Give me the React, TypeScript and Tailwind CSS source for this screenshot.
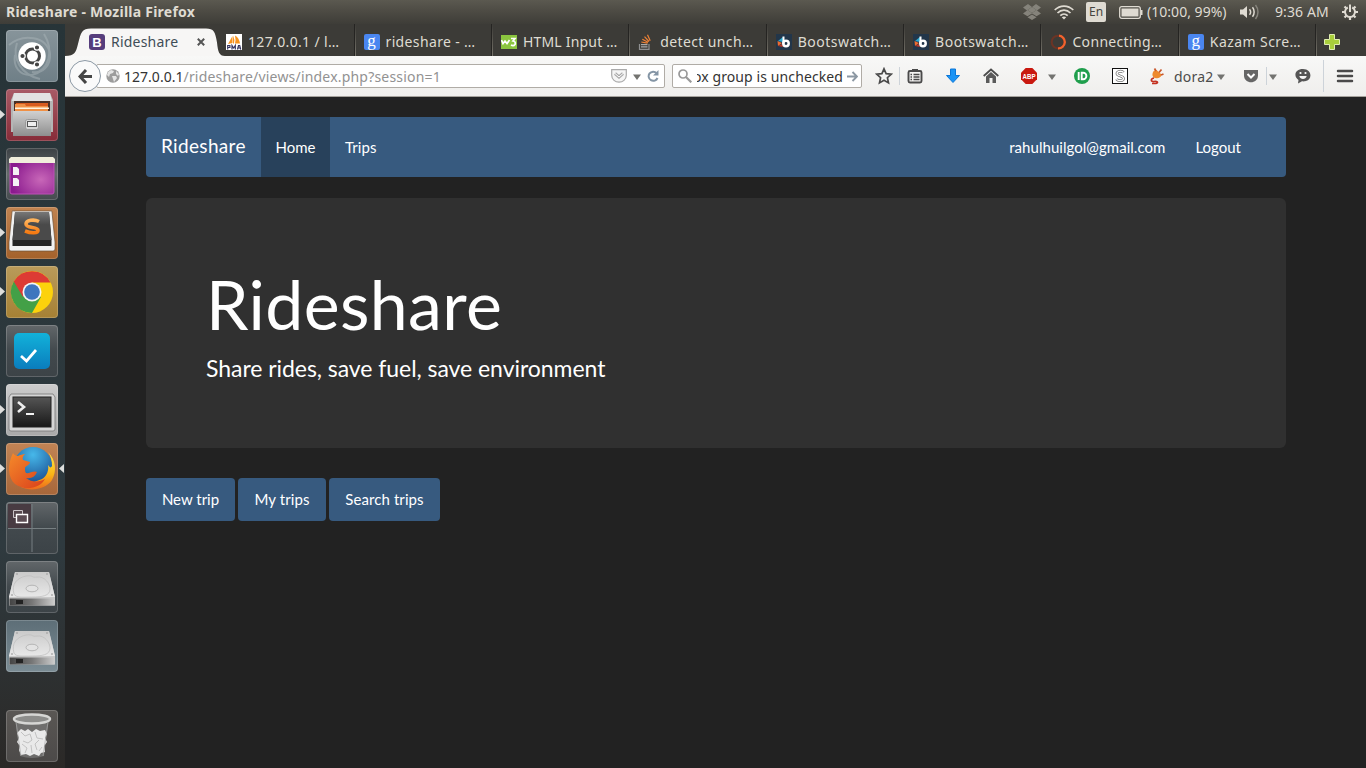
import React from "react";

type Kids = { children?: React.ReactNode };

const ui = "font-['Noto_Sans',sans-serif]";

function Down({ cls = "" }: { cls?: string }) {
  return (
    <svg width="8" height="6" viewBox="0 0 8 6" className={`relative top-px shrink-0 ${cls}`}>
      <path d="M0 .5h8L4 6z" fill="#737370" />
    </svg>
  );
}

function Sep({ cls = "" }: { cls?: string }) {
  return <div className={`w-px shrink-0 bg-[#cdd3d9] ${cls}`} />;
}

function Ico({ cls = "", children }: Kids & { cls?: string }) {
  return (
    <svg width="18" height="18" viewBox="0 0 18 18" className={`shrink-0 ${cls}`}>
      {children}
    </svg>
  );
}

/* ---------- top panel ---------- */

function TopPanel() {
  return (
    <div className={`flex h-6 shrink-0 items-center bg-linear-to-b from-[#5b5950] via-[#4c4a43] to-[#3e3d38] text-[14px] leading-6 text-[#dfdbd2] ${ui}`}>
      <div className="ml-[6px] text-[14px] font-bold tracking-[0.24px] whitespace-nowrap">Rideshare - Mozilla Firefox</div>
      <div className="ml-auto flex h-full items-center">
        <svg width="18" height="16" viewBox="0 0 18 16" className="shrink-0">
          <path d="M5 0 9 3 4.500 6 9 9 13.500 6 9 3 13 0 18 3.500 14 6.500 18 9.500 13.500 12.300 9 9.400 4.500 12.300 0 9.500 4 6.500 0 3.500zM4.500 13.200 9 10.500l4.500 2.700L9 16z" fill="#85837b" />
          <path d="M9 3 13.500 6 9 9 4.500 6z" fill="#85837b" />
        </svg>
        <svg width="20" height="15" viewBox="0 0 20 15" className="ml-[13px] shrink-0" fill="none" stroke="#dfdbd2" strokeWidth="1.700">
          <path d="M.7 5C6-.3 14-.3 19.300 5M3.500 8c3.800-3.800 9.200-3.800 13 0M6.300 10.700c2.200-2.200 5.200-2.200 7.400 0" />
          <path d="M10 14.500 7.800 12.300c1.300-1 3.100-1 4.400 0z" fill="#dfdbd2" stroke="none" />
        </svg>
        <div className="ml-[12px] flex h-5 w-5 items-center justify-center rounded-[2px] bg-[#dfdbd2] text-[12px] text-[#45443e]">En</div>
        <svg width="24" height="13" viewBox="0 0 24 13" className="ml-[13px] shrink-0">
          <rect x=".7" y=".7" width="20.600" height="11.600" rx="2" fill="none" stroke="#dfdbd2" strokeWidth="1.300" />
          <rect x="2.500" y="2.500" width="17" height="8" fill="#dfdbd2" />
          <path d="M22 4h1.500v5H22z" fill="#dfdbd2" />
        </svg>
        <div className="ml-[4px] w-[81px] text-[14px] tracking-[0.03px] whitespace-nowrap">(10:00, 99%)</div>
        <svg width="20" height="16" viewBox="0 0 20 16" className="ml-[12px] shrink-0" fill="none" stroke="#dfdbd2" strokeWidth="1.500">
          <path d="M0 5.500h3L7 2v12l-4-3.500H0z" fill="#dfdbd2" stroke="none" />
          <path d="M9.500 5.200c1.300 1.600 1.300 4 0 5.600M12.500 3.200c2.200 2.700 2.200 6.900 0 9.600" />
          <path d="M15.500 1c3.300 4 3.300 10 0 14" stroke="#85837b" />
        </svg>
        <div className="ml-[15px] w-[56px] text-[14px] tracking-[0.1px] whitespace-nowrap">9:36 AM</div>
        <svg width="16" height="16" viewBox="0 0 16 16" className="mr-[8px] ml-[11px] shrink-0" fill="none" stroke="#dfdbd2">
          <path d="M5.800 3.500a5 5 0 1 0 4.400 0" strokeWidth="2" />
          <path d="M8 .5V8" strokeWidth="2" />
          <path d="M2.500 2.500 4.300 4.300M13.500 2.500l-1.800 1.800M0 8h3M13 8h3M2.500 13.500l1.800-1.800M13.500 13.500l-1.800-1.800M8 13v3" strokeWidth="2.200" />
        </svg>
      </div>
    </div>
  );
}

/* ---------- launcher ---------- */

function Tile({ bg, cls = "", left, right, children }: Kids & { bg: string; cls?: string; left?: boolean; right?: boolean }) {
  return (
    <div className={`relative h-[52px] w-full shrink-0 ${cls}`}>
      {left && (
        <svg width="5" height="9" viewBox="0 0 5 9" className="absolute top-[21px] left-0">
          <path d="M0 0v9l5-4.500z" fill="#dededc" />
        </svg>
      )}
      {right && (
        <svg width="5" height="9" viewBox="0 0 5 9" className="absolute top-[21px] right-[1px]">
          <path d="M5 0v9L0 4.500z" fill="#dededc" />
        </svg>
      )}
      <div className={`ml-[6px] h-[52px] w-[52px] rounded-[4px] shadow-[inset_0_0_0_1px_rgba(255,255,255,0.18)] ${bg}`}>
        <svg width="52" height="52" viewBox="0 0 52 52">{children}</svg>
      </div>
    </div>
  );
}

function Drive() {
  return (
    <>
      <path d="M9 11h34l6 25v8.500H3V36z" fill="#c9c9c9" />
      <path d="M9 11h34l6 25H3z" fill="url(#drvTop)" />
      <path d="M3.500 37.500h45v7h-45z" fill="url(#drvFront)" />
      <path d="M10 39h7v4h-7z" fill="#222" />
      <path d="M8 33c-3-10 3-16 12-18 8-1 5 2 11 1 8-1 13 7 13 12 0 7-8 8-18 8S10 37 8 33z" fill="none" stroke="#bbb" strokeWidth=".7" />
      <ellipse cx="26" cy="27.500" rx="6" ry="3.300" fill="#e2e2e2" stroke="#aaa" strokeWidth=".8" />
      <g fill="#888">
        <circle cx="11" cy="13" r=".7" />
        <circle cx="41" cy="13" r=".7" />
        <circle cx="6" cy="34" r=".8" />
        <circle cx="46" cy="34" r=".8" />
      </g>
    </>
  );
}

function Defs() {
  return (
    <defs>
      <linearGradient id="drvTop" x1="0" y1="0" x2="0" y2="1"><stop offset="0" stopColor="#cacaca" /><stop offset="1" stopColor="#e8e8e8" /></linearGradient>
      <linearGradient id="drvFront"><stop offset="0" stopColor="#444" /><stop offset=".5" stopColor="#777" /><stop offset="1" stopColor="#ccc" /></linearGradient>
      <linearGradient id="cab" x1="0" y1="0" x2="0" y2="1"><stop offset="0" stopColor="#d0d0d0" /><stop offset="1" stopColor="#8e8e8e" /></linearGradient>
      <radialGradient id="purple" cx=".7" cy=".6" r=".7"><stop offset="0" stopColor="#c867b8" /><stop offset="1" stopColor="#8a1a8e" /></radialGradient>
      <linearGradient id="dark" x1="0" y1="0" x2="0" y2="1"><stop offset="0" stopColor="#777" /><stop offset=".45" stopColor="#4a4a4a" /><stop offset="1" stopColor="#4a4a4a" /></linearGradient>
      <linearGradient id="term" x1="0" y1="0" x2="0" y2="1"><stop offset="0" stopColor="#555" /><stop offset="1" stopColor="#181818" /></linearGradient>
      <linearGradient id="orange" x1="0" y1="0" x2="0" y2="1"><stop offset="0" stopColor="#ffb45c" /><stop offset="1" stopColor="#f57a12" /></linearGradient>
      <linearGradient id="task" x1="0" y1="0" x2="0" y2="1"><stop offset="0" stopColor="#12b2da" /><stop offset="1" stopColor="#0a7dbd" /></linearGradient>
      <radialGradient id="globe" cx=".5" cy=".2" r=".9"><stop offset="0" stopColor="#46b8ea" /><stop offset="1" stopColor="#12397f" /></radialGradient>
      <linearGradient id="fox" x1="0" y1="0" x2="1" y2="1"><stop offset="0" stopColor="#f58a2a" /><stop offset="1" stopColor="#d93f1c" /></linearGradient>
      <linearGradient id="tail" x1="0" y1="0" x2="0" y2="1"><stop offset="0" stopColor="#ffe94a" /><stop offset=".6" stopColor="#fbb416" /><stop offset="1" stopColor="#ee6a1d" /></linearGradient>
    </defs>
  );
}

const glass = "bg-linear-to-b from-[#62676a] via-[#42494d] to-[#3c4347]";

function Launcher() {
  return (
    <div className="flex w-[65px] shrink-0 flex-col gap-[7px] bg-linear-to-b from-[#273438] via-[#2f3a3f] via-70% to-[#2b2927] pt-[6px]">
      <Tile bg="bg-linear-to-b from-[#87949a] to-[#6f7f87]">
        <Defs />
        <g fill="none" stroke="#a9b4b8" strokeWidth="2" opacity=".5">
          <path d="M3 15C17 3 41 6 44 24c1 12-8 20-18 18" />
          <path d="M38 4c10 16 6 36-12 41C13 46 7 36 9 25" />
          <path d="M11 13C6 28 15 45 34 49" />
        </g>
        <circle cx="26" cy="26" r="13.700" fill="#fff" />
        <circle cx="26.500" cy="26" r="7" fill="none" stroke="#444" strokeWidth="3" />
        <g stroke="#fff" strokeWidth="1.200" fill="#444">
          <circle cx="16.500" cy="26" r="2.700" />
          <circle cx="31" cy="17.500" r="2.700" />
          <circle cx="31" cy="34.500" r="2.700" />
        </g>
      </Tile>
      <Tile bg="bg-linear-to-b from-[#a85a66] to-[#872b38]" left>
        <path d="M8 4h36l3 7v32H5V11z" fill="#b5b5b5" />
        <path d="M8 4h36l2 8H6z" fill="#e2e2e2" />
        <path d="M8 12h36v11H8z" fill="#4a3026" />
        <path d="M10 14h32v8H10z" fill="#d95b1e" />
        <path d="M9 15h10l1 2h22v5H9z" fill="#f09045" />
        <path d="M9 18.500h34v1.500H9z" fill="#fff3df" />
        <path d="M7 22h38v25H7z" fill="url(#cab)" />
        <rect x="19.500" y="30.500" width="13" height="10" rx="2" fill="#d5d5d5" stroke="#999" />
        <rect x="21.500" y="32.500" width="9" height="5" fill="#eee" stroke="#555" />
      </Tile>
      <Tile bg="bg-linear-to-b from-[#3b4144] via-[#656a6c] to-[#454b4f]">
        <rect x="4" y="10" width="44" height="36" rx="2" fill="url(#purple)" stroke="#bd51b6" />
        <path d="M5 9h42l2 2v4H3v-4z" fill="#f1eedc" />
        <path d="M7 19h4l2 2v6H7zM7 30h4l2 2v6H7z" fill="#f4f0f4" />
      </Tile>
      <Tile bg="bg-linear-to-b from-[#c08350] to-[#a4622b]" left>
        <path d="M6 5q0-2 2-1h36q2-1 2 1l3 30v7q0 2-2 2H5q-2 0-2-2v-7z" fill="#f1f1f1" stroke="#6b5038" strokeWidth=".7" />
        <path d="M9 5h34l2.500 28v6h-39v-6z" fill="#242424" />
        <path d="M9 5h34l2.500 28h-39z" fill="url(#dark)" />
        <path d="M33 14.500c-5-2.500-13-1.500-13 2.500 0 5 12 2 12 6.500 0 3-7 3-13 .5" fill="none" stroke="url(#orange)" strokeWidth="3.600" />
      </Tile>
      <Tile bg="bg-linear-to-b from-[#b99b5a] to-[#a68134]" left>
        <circle cx="26" cy="26" r="21" fill="#fcd20c" />
        <path d="M26 26 7.800 15.500A21 21 0 0 0 26 47L35 31z" fill="#43a047" />
        <path d="M7.800 15.500A21 21 0 0 1 44.500 16.500H26L17 31z" fill="#dd3b34" />
        <circle cx="26" cy="26" r="9.500" fill="#f5f5f5" />
        <circle cx="26" cy="26" r="7.800" fill="#3d76be" />
      </Tile>
      <Tile bg={glass}>
        <rect x="8" y="8" width="36" height="36" rx="5" fill="url(#task)" />
        <path d="m15 31 5.500 5L30 25" fill="none" stroke="#fff" strokeWidth="2.700" />
      </Tile>
      <Tile bg="bg-linear-to-b from-[#ccc] to-[#a9a9a9]" left>
        <path d="M5 10h42l2 3v32q0 2-2 2H5q-2 0-2-2V13z" fill="#d5d5d5" stroke="#777" strokeWidth=".8" />
        <rect x="7" y="13" width="38" height="30" fill="url(#term)" stroke="#222" />
        <path d="m12 18 6 5-6 5" fill="none" stroke="#eee" strokeWidth="2.600" />
        <path d="M20 29h8v2h-8z" fill="#f3f3f3" />
      </Tile>
      <Tile bg="bg-linear-to-b from-[#c18454] to-[#a7673a]" left right>
        <circle cx="27" cy="23.500" r="19.500" fill="url(#globe)" />
        <path d="M42 9c8 8 9 19 4 28-6 9-21 12-31 7L36 36c5-3 7-9 6-14 2 3 3 3 4 1 0-5-1-10-4-14z" fill="url(#tail)" />
        <path d="M7 10c1 2 3 3 5 3 2-1 5-2 7-2-2 2-3 4-2 6l7 2c0 3-5 4-5 6s0 4 1 5c3 1 8-3 11-1-2 5-6 7-11 6 6 5 14 4 19 1-5 10-21 12-30 5C2 35 1 22 7 10z" fill="url(#fox)" />
      </Tile>
      <Tile bg={glass}>
        <path d="M2 2h23v24H2z" fill="#483b42" />
        <path d="M26 2v48M2 26.500h48" stroke="#777f82" strokeWidth="1" />
        <path d="M7.500 8.500h9v7h-9z" fill="#55474d" stroke="#c9c3c6" />
        <path d="M10.500 12.500h11v8h-11z" fill="#5c4d54" stroke="#fff" strokeWidth="1.400" />
      </Tile>
      <Tile bg={glass}><Drive /></Tile>
      <Tile bg="bg-linear-to-b from-[#5d6e77] to-[#7b8c94]"><Drive /></Tile>
      <Tile bg="bg-linear-to-b from-[#5a5754] to-[#4c4a49]" cls="mt-[31px]">
        <path d="M9 8h34l-5 38q-12 4-24 0z" fill="#7b7b79" opacity=".7" />
        <path d="m11 23 4-4 4 2 3-2 4 3 4-3 4 2 5-1 2 4-2 4 2 4-3 4 1 6-4 1-2 3-5-2-4 2-4-2-5 1-2-5 1-4-3-4 2-4z" fill="#e9e9e9" />
        <path d="m15 22 4 4 5-2 2 6-4 3-5-2M29 22l2 6 6 1M33 30l-4 4 2 6M16 34l5 4-2 5M25 35l1 8M36 37l-3 4" fill="none" stroke="#c2c2c2" strokeWidth="1" />
        <ellipse cx="26" cy="9" rx="18" ry="4.500" fill="#8d8d8b" stroke="#d6d6d4" strokeWidth="2.500" />
        <path d="m10 12 5 34M42 12l-5 34" stroke="#aaa" strokeWidth=".7" />
      </Tile>
    </div>
  );
}

/* ---------- favicons ---------- */

function Fav({ children }: Kids) {
  return <svg width="16" height="16" viewBox="0 0 16 16" className="shrink-0">{children}</svg>;
}

const BootIcon = () => (
  <div className="flex h-4 w-4 shrink-0 items-center justify-center rounded-[3px] bg-[#563d7c] font-['Liberation_Sans',sans-serif] text-[13px] leading-none font-bold text-white">B</div>
);
const PmaIcon = () => (
  <Fav>
    <path d="M0 0h16v16H0z" fill="#fff" />
    <path d="M2 10 6.500 2v7zM7 9.500V1.500q2 4 1 8zM9 9.500q1-4 0-8 4 2 5 8z" fill="#f7931e" />
    <path d="M1.700 15.500v-4h2.200v2H2M6 15.500v-4l1.600 2.500 1.700-2.500v4M11.500 15.500l1-4h1.200l1 4M11.800 14h3" fill="none" stroke="#33335f" strokeWidth="1.200" />
  </Fav>
);
const GoogleIcon = () => (
  <div className="flex h-4 w-4 shrink-0 items-center justify-center rounded-[2px] bg-[#4a86f0] pb-[3px] font-['Liberation_Serif',serif] text-[17px] leading-none text-white">g</div>
);
const W3Icon = () => (
  <Fav>
    <path d="M0 1h16v14H0z" fill="#8bc53f" />
    <path d="M.5 6 2 9.500 4 7l2 2.500L8.500 6M10 4.500h4L12 7q3 .500 2 3.500-1.500 2-4 .500" fill="none" stroke="#fff" strokeWidth="1.700" />
  </Fav>
);
const StackIcon = () => (
  <Fav>
    <path d="M1.500 10v5.300h9.500V10" fill="none" stroke="#8f9091" strokeWidth="1.200" />
    <path d="M3 12.800h6.500M3 10.600h6.500" stroke="#aaa" strokeWidth="1.200" />
    <path d="m3.300 8 6.300 1.200M4.300 5.300l5.800 3M6.500 2.700l4.500 4.800M9.500.8l2.700 6" stroke="#ef8236" strokeWidth="1.200" />
  </Fav>
);
const SwatchIcon = () => (
  <Fav>
    <path d="M0 0h16v16H0z" fill="#22364a" />
    <path d="M7 3v5L2 7z" fill="#29a9d2" />
    <path d="M1.500 7 6 9l-4 3z" fill="#ee6c30" />
    <path d="m2 12 4-2 1 3z" fill="#b73527" />
    <path d="M7.500 2.500V10" stroke="#fff" strokeWidth="2" />
    <circle cx="10" cy="9.500" r="2.700" fill="none" stroke="#fff" strokeWidth="2.500" />
  </Fav>
);
const SpinIcon = () => (
  <Fav>
    <circle cx="8" cy="8" r="6.300" fill="none" stroke="#6b3425" strokeWidth="2" />
    <path d="M9 1.700a6.300 6.300 0 0 1-1 12.600" fill="none" stroke="#f2622d" strokeWidth="2.300" />
  </Fav>
);

const tabs: [React.ComponentType, string, string][] = [
  [GoogleIcon, "rideshare - …", "tracking-[0.36px]"],
  [W3Icon, "HTML Input …", "tracking-[0.2px]"],
  [StackIcon, "detect unch…", "tracking-[0.38px]"],
  [SwatchIcon, "Bootswatch…", "tracking-[0.5px]"],
  [SwatchIcon, "Bootswatch…", "tracking-[0.5px]"],
  [SpinIcon, "Connecting…", "tracking-[0.32px]"],
  [GoogleIcon, "Kazam Scre…", "tracking-[0.42px]"],
];

function TabStrip() {
  return (
    <div className={`flex h-8 shrink-0 bg-[#3c3b37] text-[14px] text-[#dfdbd2] ${ui}`}>
      <div className="relative flex w-[157px] shrink-0 items-center pt-[4px] pl-[24px]">
        <svg width="160" height="28" viewBox="0 0 160 28" className="absolute top-[4px] left-0">
          <path d="M0 28c10 0 11-4 13-12C16 4 17 .5 26 .5h115c8 0 9 3 11 14 1 9 2 13.500 8 13.500z" fill="#f7f6f5" />
        </svg>
        <div className="relative flex items-center">
          <BootIcon />
          <span className="mb-[2px] ml-[6px] w-[86px] tracking-[0.2px] text-[#3f4d57]">Rideshare</span>
          <svg width="8" height="8" viewBox="0 0 8 8"><path d="m.8.8 6.400 6.400M7.200.8.8 7.200" stroke="#555" strokeWidth="2" /></svg>
        </div>
      </div>
      <div className="flex w-[131.500px] shrink-0 items-center pt-[4px] pl-[4px] whitespace-nowrap">
        <PmaIcon />
        <span className="mb-[2px] ml-[6px] tracking-[0.35px]">127.0.0.1 / l…</span>
      </div>
      {tabs.map(([Icon, label, tr], i) => (
        <div key={i} className="flex w-[137.400px] shrink-0 items-center pt-[4px] whitespace-nowrap">
          <div className="-mt-[4px] h-8 w-[2px] shrink-0 border-l border-[#252422] bg-linear-to-b from-[#3c3b37] to-[#77746b]" />
          <div className="ml-[8px] flex items-center">
            <Icon />
            <span className={`mb-[2px] ml-[6px] ${tr}`}>{label}</span>
          </div>
        </div>
      ))}
      <div className="flex grow items-center pt-[4px]">
        <div className="-mt-[4px] mr-[7px] h-8 w-[2px] shrink-0 border-l border-[#252422] bg-linear-to-b from-[#3c3b37] to-[#77746b]" />
        <Fav><path d="M5.500.5h5v5h5v5h-5v5h-5v-5h-5v-5h5z" fill="#a9cf3c" stroke="#e0eeb0" /></Fav>
      </div>
    </div>
  );
}

/* ---------- navigation toolbar ---------- */

function Toolbar() {
  return (
    <div className={`flex h-[41px] shrink-0 items-center border-b border-[#a5a29c] bg-linear-to-b from-[#f8f8f7] to-[#efeeec] text-[14px] text-[#333] ${ui}`}>
      <div className="z-10 ml-[4px] flex h-8 w-8 shrink-0 items-center justify-center rounded-full border border-[#8c99a5] bg-[#fafafa]">
        <svg width="15" height="15" viewBox="0 0 15 15" fill="none" stroke="#454545" strokeWidth="3"><path d="M8 1 2 7.500 8 14M2.500 7.500H14" /></svg>
      </div>
      <div className="-ml-[5px] flex h-6 w-[569px] shrink-0 items-center rounded-[2px] border border-[#b0aca6] bg-white pl-[9px]">
        <svg width="14" height="14" viewBox="0 0 14 14" className="shrink-0">
          <circle cx="7" cy="7" r="6.700" fill="#9c9c9c" />
          <path d="M2 3 5 1l3 1-1 2-3 1-1 3-2-2zM6 7l4 0 1 2-3 4-1-3zM10 2l3 3-1 2-2-2z" fill="#e4e4e4" />
        </svg>
        <span className="ml-[4px] tracking-[0.02px] whitespace-nowrap">127.0.0.1<span className="tracking-[0.19px] text-[#929292]">/rideshare/views/index.php?session=1</span></span>
        <svg width="16" height="14" viewBox="0 0 16 14" className="ml-auto" fill="none" stroke="#aaa">
          <path d="M.7.700h14.600v5.500c0 9.200-14.600 9.200-14.600 0z" strokeWidth="1.200" fill="#f5f5f5" />
          <path d="m4 4.500 4 3.500 4-3.500" strokeWidth="3" /><path d="m4 4.500 4 3.500 4-3.500" stroke="#fff" />
        </svg>
        <Down cls="ml-[6px]" />
        <svg width="12" height="12" viewBox="0 0 12 12" className="mr-[5px] ml-[6px]" fill="none" stroke="#8495a5" strokeWidth="2">
          <path d="M9.500 3A4.600 4.600 0 1 0 10.500 8" /><path d="M11.500 0v5.500H6z" fill="#8495a5" stroke="none" />
        </svg>
      </div>
      <div className="ml-[7px] flex h-6 w-[190px] shrink-0 items-center rounded-[2px] border border-[#b0aca6] bg-white pl-[5px]">
        <svg width="14" height="14" viewBox="0 0 14 14" className="shrink-0" fill="none" stroke="#999"><circle cx="5" cy="5" r="4" strokeWidth="1.700" /><path d="m8 8 5.300 5.300" strokeWidth="2.200" /></svg>
        <div className="ml-[5px] flex w-[146px] shrink-0 justify-end overflow-hidden whitespace-nowrap"><span className="tracking-[0.1px]">ox group is unchecked</span></div>
        <svg width="11" height="11" viewBox="0 0 11 11" className="ml-[4px] shrink-0" fill="none" stroke="#8c98a3" strokeWidth="1.900"><path d="M0 5.500h9M5.500 1 10 5.500 5.500 10" /></svg>
      </div>
      <Ico cls="ml-[13px]"><path d="m9 1.800 2.100 4.800 5.100.600-3.800 3.500 1.100 5.200L9 13.300l-4.500 2.600 1.100-5.200L1.800 7.200l5.100-.6z" fill="none" stroke="#4a4a4a" strokeWidth="1.700" /></Ico>
      <Sep cls="ml-[6px] h-[18px]" />
      <Ico cls="ml-[6px]">
        <rect x="2.500" y="4" width="13" height="11.500" rx="1.500" fill="none" stroke="#4a4a4a" strokeWidth="1.900" />
        <path d="M6 2h6v3H6z" fill="#4a4a4a" />
        <path d="M4.500 7.500h1.500M7.500 7.500h6M4.500 10h1.500M7.500 10h6M4.500 12.500h1.500M7.500 12.500h6" stroke="#4a4a4a" strokeWidth="1.500" />
      </Ico>
      <Ico cls="ml-[20px]"><path d="M6.500 2h5v6.500h4L9 15.500 2.500 8.500h4z" fill="#1b94f5" stroke="#0b77d8" /></Ico>
      <Ico cls="ml-[20px]"><path d="M1.700 9 9 2.500 16.300 9" fill="none" stroke="#4c4c4c" strokeWidth="1.800" /><path d="M4 9.500 9 5l5 4.500V16h-3.500v-5h-3v5H4z" fill="#5a5a5a" /></Ico>
      <Ico cls="ml-[20px]">
        <path d="M5.700 1h6.600L17 5.700v6.600L12.300 17H5.700L1 12.300V5.700z" fill="#c9180f" />
        <text x="9" y="11.800" textAnchor="middle" fontFamily="Liberation Sans" fontWeight="bold" fontSize="8" textLength="13" lengthAdjust="spacingAndGlyphs" fill="#fff">ABP</text>
      </Ico>
      <Down cls="ml-[10px]" />
      <Ico cls="ml-[17px]"><circle cx="9" cy="9" r="8" fill="#1f9e4c" /><path d="M5.700 5v8M8.700 5.800h1.500a3.200 3.200 0 0 1 0 6.400H8.700z" fill="none" stroke="#fff" strokeWidth="1.900" /></Ico>
      <Ico cls="ml-[20px]"><rect x="1.500" y="1.500" width="15" height="15" fill="#fff" stroke="#111" /><path d="M12.500 5.500C11 3.500 6 4 6 6.500c0 3 6.500 2 6.500 5 0 2.500-5.500 3-7 .5" fill="none" stroke="#777" strokeWidth="2.800" /><path d="M12.500 5.500C11 3.500 6 4 6 6.500c0 3 6.500 2 6.500 5 0 2.500-5.500 3-7 .5" fill="none" stroke="#fff" strokeWidth="1.300" /></Ico>
      <Ico cls="ml-[19px]">
        <path d="M4.500 8.500C4 5 7 2 9 3.500l4.500 4c0 3-5 5-8 3z" fill="#ee8a2e" />
        <path d="m8 4-1.500-2.500M11 5.500l2.500-3M13 8l2.500-1" stroke="#c9572b" strokeWidth="1.700" />
        <path d="M6 11c-4 1-3 4 0 3.500s5 1 2 2H4" fill="none" stroke="#c4301f" strokeWidth="1.700" />
      </Ico>
      <span className="ml-[8px] w-[41px] shrink-0 tracking-[0.2px] text-[#4c4c4c]">dora2</span>
      <Down cls="ml-[2px]" />
      <Ico cls="ml-[17px]"><path d="M2 3h14v5.500c0 9-14 9-14 0z" fill="#666" /><path d="m5.500 7 3.500 3.500L12.500 7" fill="none" stroke="#fff" strokeWidth="2" /></Ico>
      <Sep cls="ml-[6px] h-[18px]" />
      <Down cls="ml-[2px]" />
      <Ico cls="ml-[17px]">
        <path d="M9 2c9 0 10 11 2 12.300-1.500.2-2 .2-3 0L4 16.500l.5-3.500C-1 9 1 2 9 2z" fill="#555" />
        <path d="M5.300 9h7.400c-.7 4-6.700 4-7.400 0z" fill="#f5f5f5" /><circle cx="6.500" cy="6" r="1.100" fill="#fff" /><circle cx="11.500" cy="6" r="1.100" fill="#fff" />
      </Ico>
      <Sep cls="ml-[11px] h-[32px]" />
      <Ico cls="ml-[12px]"><path d="M2 4h14M2 9h14M2 14h14" stroke="#4a4a4a" strokeWidth="2.500" strokeLinecap="round" /></Ico>
    </div>
  );
}

/* ---------- web page ---------- */

function Page() {
  return (
    <main className="flex grow flex-col bg-[#222] pt-5 font-['Lato',sans-serif] text-[15px] text-white">
      <div className="ml-[81px] w-[1140px]">
        <nav className="flex h-[60px] items-center rounded-[4px] bg-[#375a7f]">
          <a className="w-[115px] pb-[2px] pl-[15px] text-[19px] tracking-[0.33px]">Rideshare</a>
          <a className="flex h-full w-[69px] items-center justify-center bg-[#28415b]">Home</a>
          <a className="ml-[15px] tracking-[0.1px]">Trips</a>
          <a className="ml-auto tracking-[0.04px]">rahulhuilgol@gmail.com</a>
          <a className="mr-[45px] ml-[30px]">Logout</a>
        </nav>
        <section className="mt-[21px] h-[250px] rounded-[6px] bg-[#303030] px-[60px] pt-[68px]">
          <h1 className="text-[68px] leading-[75px] tracking-[0.38px]">Rideshare</h1>
          <p className="mt-[11px] text-[23px] leading-[33px] tracking-[-0.05px]">Share rides, save fuel, save environment</p>
        </section>
        <div className="mt-[30px] flex gap-[3px]">
          <button className="h-[43px] w-[89px] rounded-[4px] bg-[#375a7f]">New trip</button>
          <button className="h-[43px] w-[88px] rounded-[4px] bg-[#375a7f] tracking-[0.08px]">My trips</button>
          <button className="h-[43px] w-[111px] rounded-[4px] bg-[#375a7f] tracking-[0.08px]">Search trips</button>
        </div>
      </div>
    </main>
  );
}

export default function App() {
  return (
    <div className="flex h-[768px] w-[1366px] flex-col overflow-hidden bg-[#222]">
      <TopPanel />
      <div className="flex min-h-0 grow">
        <Launcher />
        <div className="flex w-[1301px] flex-col">
          <TabStrip />
          <Toolbar />
          <Page />
        </div>
      </div>
    </div>
  );
}
